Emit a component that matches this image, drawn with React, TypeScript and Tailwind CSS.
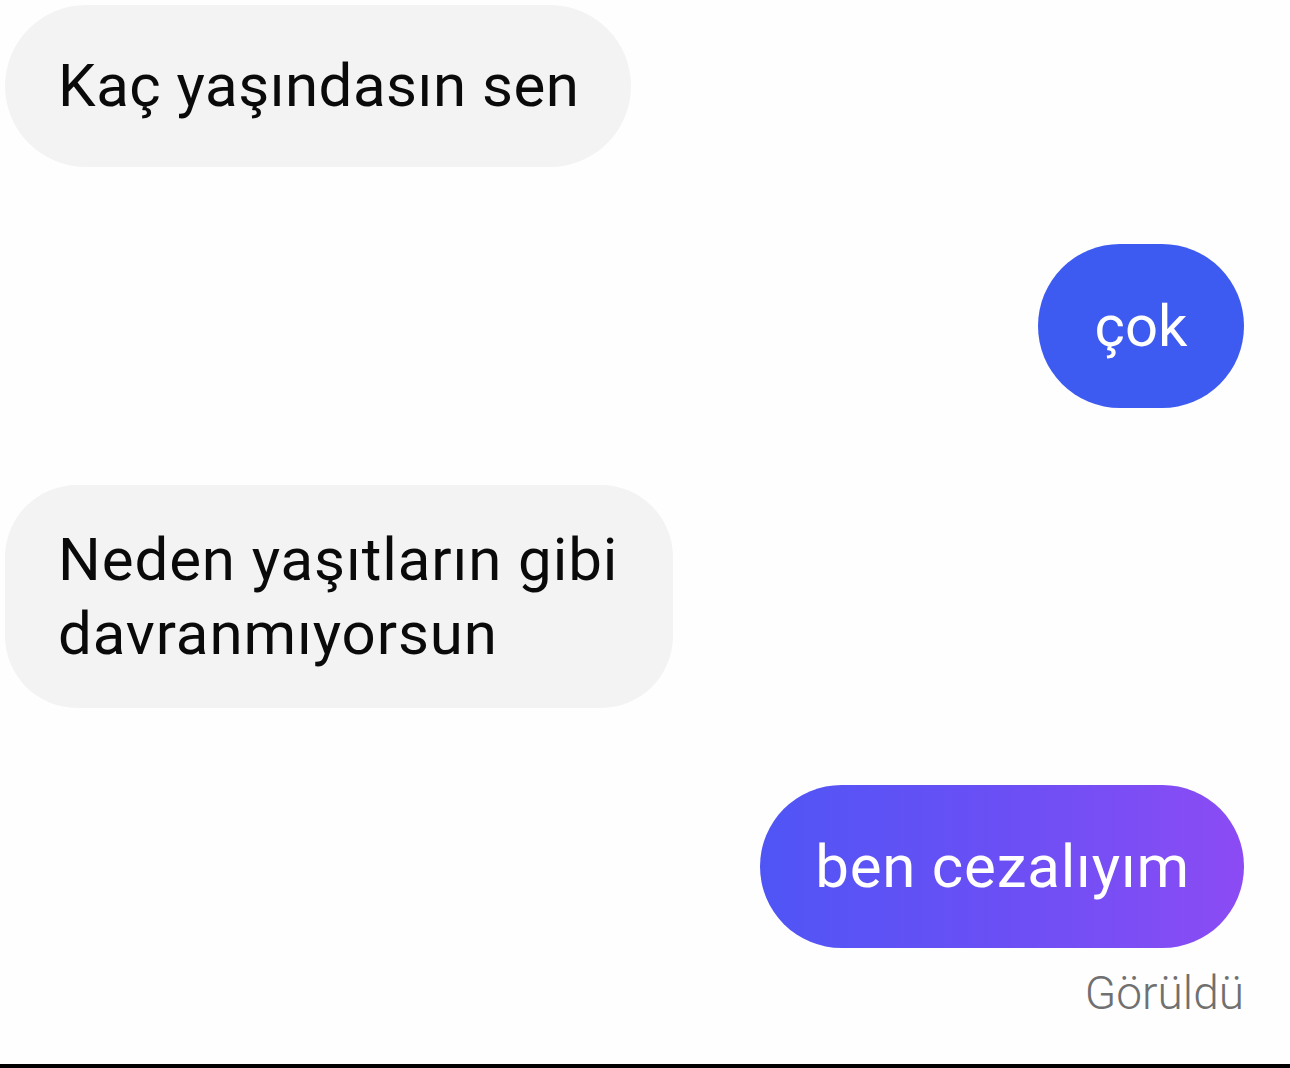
import React from "react";

const font = { fontFamily: "Roboto, 'Liberation Sans', sans-serif" };

const App: React.FC = () => {
  return (
    <div className="w-[1290px] h-[1068px] bg-[#fefefe] flex flex-col overflow-hidden" style={font}>
      <div className="flex-1 flex flex-col pt-[5px] pl-[5px] pr-[46px] gap-[77px]">
        {/* incoming */}
        <div className="self-start h-[162px] rounded-full bg-[#f3f3f3] pl-[53px] pr-[52px] flex items-center">
          <span className="text-[60px] leading-none text-[#0a0a0a] tracking-[0.5px]">Kaç yaşındasın sen</span>
        </div>

        {/* outgoing */}
        <div className="self-end h-[164px] w-[206px] rounded-full bg-[#3d5af1] flex items-center justify-center">
          <span className="text-[58px] leading-none text-white">çok</span>
        </div>

        <div className="self-start h-[223px] rounded-[72px] bg-[#f3f3f3] pl-[53px] pr-[55px] flex items-center">
          <p className="text-[60px] leading-[74px] text-[#0a0a0a] tracking-[0.9px]">
            Neden yaşıtların gibi
            <br />
            davranmıyorsun
          </p>
        </div>

        <div className="self-end flex flex-col items-end">
          <div className="h-[163px] rounded-full bg-gradient-to-r from-[#4f55f5] via-[#6a4ff5] to-[#8c4bf4] pl-[55px] pr-[54px] flex items-center">
            <span className="text-[60px] leading-none text-white tracking-[0.8px]">ben cezalıyım</span>
          </div>
          <span className="mt-[22px] text-[46px] leading-none text-[#707070] font-light">Görüldü</span>
        </div>
      </div>
      <div className="h-[4px] bg-black" />
    </div>
  );
};

export default App;
